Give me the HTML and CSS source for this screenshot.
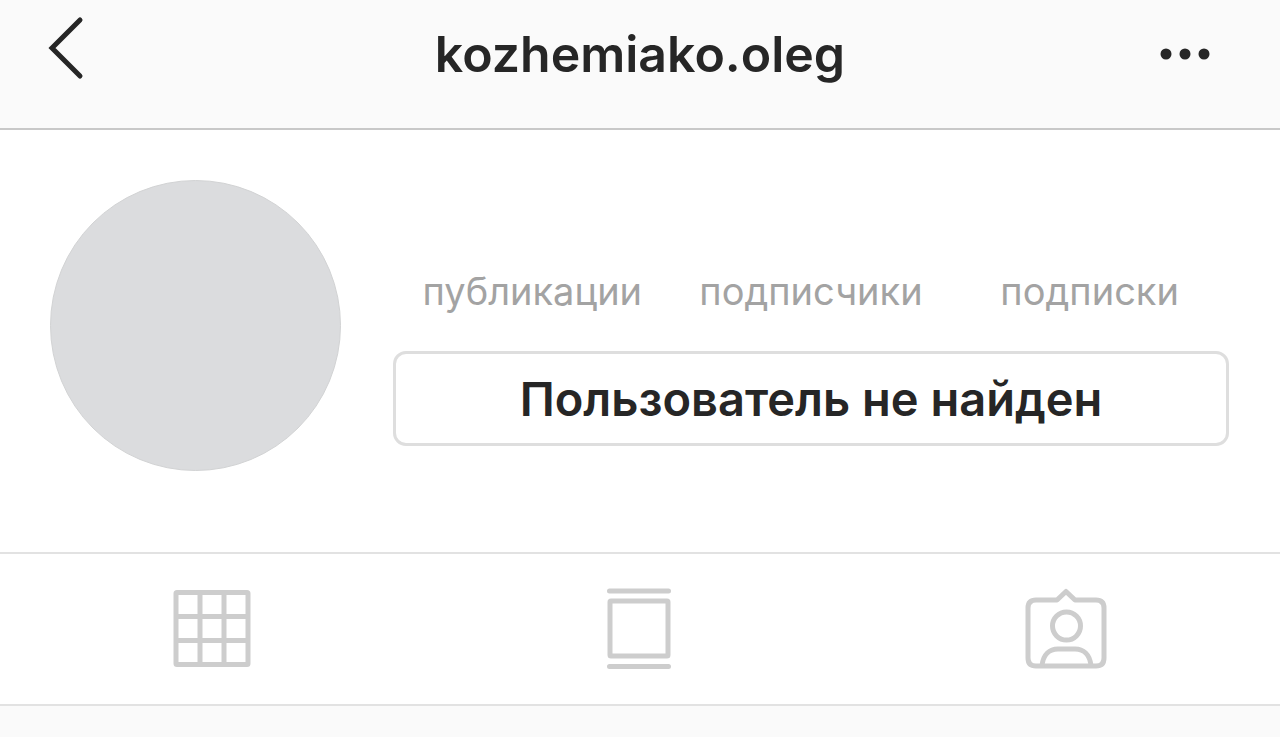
FILE: index.html
```html
<!DOCTYPE html>
<html lang="ru">
<head>
    <meta charset="UTF-8">
    <meta name="viewport" content="width=device-width, initial-scale=1.0">
    <title>kozhemiako.oleg</title>
    <link rel="stylesheet" href="styles.css">
</head>
<body>
    <header class="top-bar">
        <button class="icon-btn" type="button" aria-label="Назад">
            <svg class="back-icon" width="36" height="64" viewBox="0 0 36 64">
                <path d="M32 4 L4 32 L32 60" />
            </svg>
        </button>
        <h1>kozhemiako.oleg</h1>
        <button class="icon-btn menu-btn" type="button" aria-label="Меню">
            <svg class="dots-icon" width="50" height="12" viewBox="0 0 50 12">
                <circle cx="6" cy="6" r="5.5" />
                <circle cx="25" cy="6" r="5.5" />
                <circle cx="44" cy="6" r="5.5" />
            </svg>
        </button>
    </header>

    <main>
        <section class="profile">
            <div class="avatar"></div>
            <div class="profile-info">
                <ul class="stats">
                    <li>публикации</li>
                    <li>подписчики</li>
                    <li>подписки</li>
                </ul>
                <button class="status-btn" type="button">Пользователь не найден</button>
            </div>
        </section>

        <nav class="tabs">
            <a href="#grid" aria-label="Сетка">
                <svg width="84" height="84" viewBox="0 0 84 84">
                    <rect x="5" y="5.5" width="72" height="72" rx="1" />
                    <path d="M29 5 V78 M53 5 V78 M5 29.5 H77 M5 53.5 H77" />
                </svg>
            </a>
            <a href="#feed" aria-label="Лента">
                <svg width="84" height="84" viewBox="0 0 84 84">
                    <path d="M11.5 4 H70.5 M11.5 79.5 H70.5" stroke-linecap="round" />
                    <rect x="12" y="14" width="58" height="55" rx="1" />
                </svg>
            </a>
            <a href="#tagged" aria-label="Отметки">
                <svg width="84" height="84" viewBox="0 0 84 84">
                    <path d="M11 13 H32 L41 4.5 L50 13 H71 Q79 13 79 21 V71 Q79 79 71 79 H11 Q3 79 3 71 V21 Q3 13 11 13 Z" stroke-linejoin="round" />
                    <circle cx="41.5" cy="39" r="14" />
                    <path d="M17 79 C18 67 25 62 33 62 H50 C58 62 65 67 66 79" />
                </svg>
            </a>
        </nav>
    </main>
</body>
</html>
```

FILE: styles.css
```css
* {
    box-sizing: border-box;
}

body {
    font-family: Inter, "Liberation Sans", sans-serif;
    background-color: #fafafa;
    color: #262626;
    margin: 0;
}

.top-bar {
    display: grid;
    grid-template-columns: 1fr auto 1fr;
    align-items: start;
    padding: 16px 48px 0;
    height: 130px;
    border-bottom: 2px solid #c8c8c8;
}

.top-bar h1 {
    margin: 0;
    font-size: 50px;
    font-weight: 600;
    line-height: 76px;
}

.icon-btn {
    display: flex;
    align-items: center;
    justify-self: start;
    height: 64px;
    padding: 0;
    border: none;
    background: none;
    cursor: pointer;
}

.menu-btn {
    justify-self: end;
    height: 76px;
    padding-right: 22px;
}

.back-icon {
    fill: none;
    stroke: #262626;
    stroke-width: 5;
    stroke-linecap: round;
}

.dots-icon {
    fill: #262626;
}

.profile {
    display: flex;
    align-items: flex-start;
    gap: 52px;
    padding: 50px 51px 81px 50px;
    background-color: #fff;
}

.avatar {
    flex: none;
    width: 291px;
    height: 291px;
    border: 1px solid #d2d3d4;
    border-radius: 50%;
    background-color: #dbdcde;
}

.profile-info {
    flex: 1;
    padding-top: 87px;
}

.stats {
    display: grid;
    grid-template-columns: repeat(3, 1fr);
    margin: 0 0 36px;
    padding: 0;
    list-style: none;
    color: #a3a3a3;
    font-size: 38px;
    line-height: 48px;
    text-align: center;
}

.status-btn {
    display: block;
    width: 100%;
    height: 95px;
    padding: 0;
    border: 3px solid #dedede;
    border-radius: 13px;
    background-color: #fff;
    color: #262626;
    font-family: inherit;
    font-size: 47px;
    font-weight: 600;
    cursor: pointer;
}

.tabs {
    display: grid;
    grid-template-columns: repeat(3, 1fr);
    border-top: 2px solid #e2e2e2;
    border-bottom: 2px solid #e2e2e2;
    background-color: #fff;
}

.tabs a {
    display: flex;
    justify-content: center;
    padding: 33px 0;
}

.tabs svg {
    fill: none;
    stroke: #cdcdcd;
    stroke-width: 5;
}
```
